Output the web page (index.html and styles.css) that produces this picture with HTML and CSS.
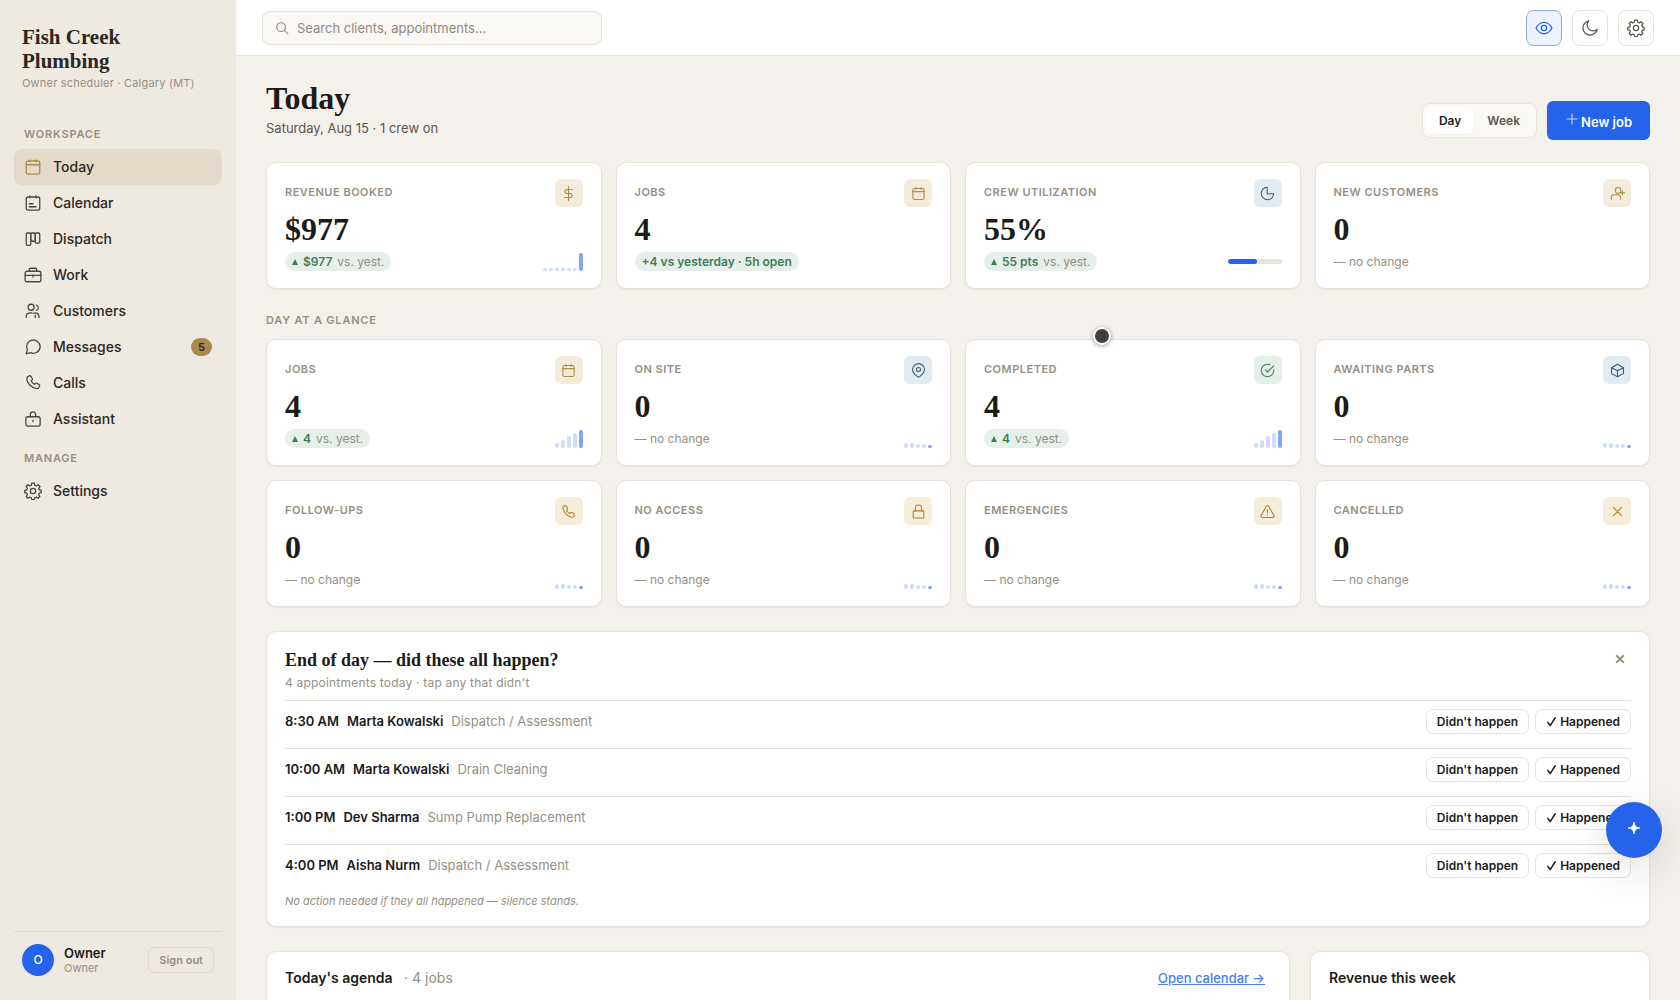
FILE: index.html
```
<!DOCTYPE html>
<html lang="en">
<head>
  <meta charset="UTF-8" />
  <title>Today - Fish Creek Plumbing</title>
  <meta name="viewport" content="width=device-width, initial-scale=1.0" />
  <link rel="stylesheet" href="styles.css">
</head>
<body>

<!-- icon sprite -->
<svg class="sprite" aria-hidden="true">
  <symbol id="i-calendar" viewBox="0 0 24 24"><rect x="3" y="4" width="18" height="17.500" rx="2.500"/><path d="M3 9h18M8 2.500V5M16 2.500V5"/></symbol>
  <symbol id="i-schedule" viewBox="0 0 24 24"><rect x="3" y="4" width="18" height="17.500" rx="2.500"/><path d="M8 2.500V5M16 2.500V5M7 13h5M7 17h9"/></symbol>
  <symbol id="i-board" viewBox="0 0 24 24"><rect x="3" y="4" width="6" height="16.500" rx="1.500"/><rect x="9" y="4" width="6" height="11" rx="1.500"/><rect x="15" y="4" width="6" height="13.500" rx="1.500"/></symbol>
  <symbol id="i-work" viewBox="0 0 24 24"><rect x="1.500" y="7" width="21" height="14" rx="2.500"/><path d="M7 7V5a2 2 0 0 1 2-2h6a2 2 0 0 1 2 2v2M1.500 12.500h21M12 12v2.500"/></symbol>
  <symbol id="i-people" viewBox="0 0 24 24"><circle cx="9.500" cy="7" r="4"/><path d="M3 20.500v-1c0-3.500 2.500-5 5.500-5h2M16.500 4c1.500.500 2.500 1.800 2.500 3.500S18 10.500 16.500 11M12.500 15c4-1.500 7.500.500 7.500 4.500v1M15 17.500v3"/></symbol>
  <symbol id="i-chat" viewBox="0 0 24 24"><path d="M21.500 11.500a9 9 0 0 1-13 8L3 21l1.500-5.200a9 9 0 1 1 17-4.300z"/></symbol>
  <symbol id="i-phone" viewBox="0 0 24 24"><path d="M21 16.400v2.700a2 2 0 0 1-2.200 2A17.500 17.500 0 0 1 3 5.200 2 2 0 0 1 5 3h2.700a2 2 0 0 1 2 1.700c.1.900.3 1.700.6 2.500a2 2 0 0 1-.4 2L8.800 10.300a14 14 0 0 0 5 5l1.100-1.100a2 2 0 0 1 2-.4c.8.300 1.600.5 2.500.6a2 2 0 0 1 1.600 2z"/></symbol>
  <symbol id="i-call" viewBox="0 0 24 24"><path d="M4 4.500L7 2.500a1.500 1.500 0 0 1 2 .4l2 3.100a1.500 1.500 0 0 1-.3 1.900L9.500 9c.8 2 2.500 3.800 4.700 4.800l1.500-1.300a1.500 1.500 0 0 1 1.800-.1l2.800 1.900a1.500 1.500 0 0 1 .4 2L19 19.300C11.500 20.500 3 12.500 4 4.500z"/></symbol>
  <symbol id="i-assistant" viewBox="0 0 24 24"><rect x="2.500" y="9" width="19" height="12.500" rx="2.500"/><path d="M8.500 9V6a3.500 3.500 0 0 1 7 0v3M12 13.500v2"/></symbol>
  <symbol id="i-gear" viewBox="0 0 24 24"><circle cx="12" cy="12" r="3.500"/><path d="M10.300 1.500h3.400l.6 2.800 2.200.9 2.400-1.600 2.400 2.400-1.600 2.500.9 2.100 2.300.7v2.900l-2.400.6-.9 2.200 1.500 2.400-2.300 2.300-2.400-1.500-2.200.9-.7 2.400h-3l-.7-2.400-2.200-.9-2.400 1.500-2.300-2.300 1.500-2.400-.9-2.200-2.500-.6v-3l2.500-.6.900-2.200-1.500-2.400 2.300-2.400 2.400 1.600 2.200-.9z"/></symbol>
  <symbol id="i-search" viewBox="0 0 24 24"><circle cx="10.500" cy="10.500" r="7.500"/><path d="M16 16l6 6"/></symbol>
  <symbol id="i-eye" viewBox="0 0 24 24"><path d="M1.500 12S5 4.500 12 4.500 22.500 12 22.500 12 19 19.500 12 19.500 1.500 12 1.500 12z"/><circle cx="12" cy="12" r="3.500"/></symbol>
  <symbol id="i-moon" viewBox="0 0 24 24"><path d="M21.500 13.500A9.500 9.500 0 1 1 10.500 2.500a7.500 7.500 0 0 0 11 11z"/></symbol>
  <symbol id="i-plus" viewBox="0 0 24 24"><path d="M12 2v20M2 12h20"/></symbol>
  <symbol id="i-dollar" viewBox="0 0 24 24"><path d="M12 1v22M18 5.500H9.500a3.250 3.250 0 0 0 0 6.500h5a3.250 3.250 0 0 1 0 6.500H5.500"/></symbol>
  <symbol id="i-pie" viewBox="0 0 24 24"><path d="M11.500 2A10 10 0 1 0 22 12.500H11.500z"/></symbol>
  <symbol id="i-user-plus" viewBox="0 0 24 24"><circle cx="13" cy="7" r="4.500"/><path d="M2 21v-2c0-3 2-5 5-5h5c3 0 5 2 5 5v2M20 7.500v7M16.500 11h7"/></symbol>
  <symbol id="i-pin" viewBox="0 0 24 24"><path d="M21.500 10.500C21.500 17 12 23 12 23S2.500 17 2.500 10.500a9.500 9.500 0 0 1 19 0z"/><circle cx="12" cy="10.500" r="3.200"/></symbol>
  <symbol id="i-check" viewBox="0 0 24 24"><path d="M22 11v1a10 10 0 1 1-6-9.200M22 4.500L12 14.500l-3.500-3.500"/></symbol>
  <symbol id="i-box" viewBox="0 0 24 24"><path d="M21.500 7.500L12 2 2.500 7.500v9.500L12 22l9.500-5zM2.500 7.500L12 12.500l9.500-5M12 12.500V22"/></symbol>
  <symbol id="i-lock" viewBox="0 0 24 24"><rect x="3.500" y="11" width="17" height="11.500" rx="1"/><path d="M7 11V6.500a5 5 0 0 1 10 0V11"/></symbol>
  <symbol id="i-alert" viewBox="0 0 24 24"><path d="M10.300 3.300L1.700 18.500A2 2 0 0 0 3.400 21.500h17.200a2 2 0 0 0 1.700-3L13.700 3.300a2 2 0 0 0-3.400 0zM12 9v5M12 17.500v.5"/></symbol>
  <symbol id="i-x" viewBox="0 0 24 24"><path d="M5.500 5.500l13 13M18.500 5.500l-13 13"/></symbol>
  <symbol id="i-tick" viewBox="0 0 12 12"><path d="M2 7l2.500 3.500L10 2"/></symbol>
  <symbol id="i-spark" viewBox="0 0 24 24"><path d="M12 0c1 8 4 11 12 12-8 1-11 4-12 12-1-8-4-11-12-12 8-1 11-4 12-12z"/></symbol>
</svg>

<div class="app">
  <aside class="sidebar">
    <div class="brand">
      <div class="brand-name">Fish Creek Plumbing</div>
      <div class="brand-sub">Owner scheduler · Calgary (MT)</div>
    </div>

    <nav class="nav">
      <div class="nav-label">Workspace</div>
      <a href="#today" class="nav-item active"><svg><use href="#i-calendar"/></svg>Today</a>
      <a href="#calendar" class="nav-item"><svg><use href="#i-schedule"/></svg>Calendar</a>
      <a href="#dispatch" class="nav-item"><svg><use href="#i-board"/></svg>Dispatch</a>
      <a href="#work" class="nav-item"><svg><use href="#i-work"/></svg>Work</a>
      <a href="#customers" class="nav-item"><svg><use href="#i-people"/></svg>Customers</a>
      <a href="#messages" class="nav-item"><svg><use href="#i-chat"/></svg>Messages<span class="count">5</span></a>
      <a href="#calls" class="nav-item"><svg><use href="#i-call"/></svg>Calls</a>
      <a href="#assistant" class="nav-item"><svg><use href="#i-assistant"/></svg>Assistant</a>
      <div class="nav-label">Manage</div>
      <a href="#settings" class="nav-item"><svg><use href="#i-gear"/></svg>Settings</a>
    </nav>

    <div class="user">
      <div class="avatar">O</div>
      <div class="user-info">
        <div class="user-name">Owner</div>
        <div class="user-role">Owner</div>
      </div>
      <button type="button" class="sign-out">Sign out</button>
    </div>
  </aside>

  <div class="page">
    <header class="topbar">
      <label class="search">
        <svg><use href="#i-search"/></svg>
        <input type="search" placeholder="Search clients, appointments..." aria-label="Search" />
      </label>
      <div class="tools">
        <button type="button" class="icon-btn on" aria-label="Toggle view"><svg><use href="#i-eye"/></svg></button>
        <button type="button" class="icon-btn" aria-label="Dark mode"><svg><use href="#i-moon"/></svg></button>
        <button type="button" class="icon-btn" aria-label="Settings"><svg><use href="#i-gear"/></svg></button>
      </div>
    </header>

    <main class="content">
      <div class="page-head">
        <div>
          <h1>Today</h1>
          <p class="date">Saturday, Aug 15 · 1 crew on</p>
        </div>
        <div class="head-actions">
          <div class="segment">
            <button type="button" class="selected">Day</button>
            <button type="button">Week</button>
          </div>
          <button type="button" class="new-job"><svg><use href="#i-plus"/></svg>New job</button>
        </div>
      </div>

      <section class="cards">
        <div class="card">
          <div class="card-top"><span class="label">Revenue booked</span><span class="badge gold"><svg><use href="#i-dollar"/></svg></span></div>
          <div class="value">$977</div>
          <div class="card-foot">
            <span class="pill"><i class="up"></i><b>$977</b> vs. yest.</span>
            <span class="spark week"><i></i><i></i><i></i><i></i><i></i><i></i><i></i></span>
          </div>
        </div>
        <div class="card">
          <div class="card-top"><span class="label">Jobs</span><span class="badge gold"><svg><use href="#i-calendar"/></svg></span></div>
          <div class="value">4</div>
          <div class="card-foot"><span class="pill"><b>+4 vs yesterday · 5h open</b></span></div>
        </div>
        <div class="card">
          <div class="card-top"><span class="label">Crew utilization</span><span class="badge blue"><svg><use href="#i-pie"/></svg></span></div>
          <div class="value">55%</div>
          <div class="card-foot">
            <span class="pill"><i class="up"></i><b>55 pts</b> vs. yest.</span>
            <span class="meter"><i style="width: 54%"></i></span>
          </div>
        </div>
        <div class="card">
          <div class="card-top"><span class="label">New customers</span><span class="badge gold"><svg><use href="#i-user-plus"/></svg></span></div>
          <div class="value">0</div>
          <div class="card-foot"><span class="flat">— no change</span></div>
        </div>
      </section>

      <h2 class="section-label">Day at a glance</h2>

      <section class="cards">
        <div class="card">
          <div class="card-top"><span class="label">Jobs</span><span class="badge gold"><svg><use href="#i-calendar"/></svg></span></div>
          <div class="value">4</div>
          <div class="card-foot">
            <span class="pill"><i class="up"></i><b>4</b> vs. yest.</span>
            <span class="spark rise"><i></i><i></i><i></i><i></i><i></i></span>
          </div>
        </div>
        <div class="card">
          <div class="card-top"><span class="label">On site</span><span class="badge blue"><svg><use href="#i-pin"/></svg></span></div>
          <div class="value">0</div>
          <div class="card-foot">
            <span class="flat">— no change</span>
            <span class="spark"><i></i><i></i><i></i><i></i><i></i></span>
          </div>
        </div>
        <div class="card">
          <div class="card-top"><span class="label">Completed</span><span class="badge green"><svg><use href="#i-check"/></svg></span></div>
          <div class="value">4</div>
          <div class="card-foot">
            <span class="pill"><i class="up"></i><b>4</b> vs. yest.</span>
            <span class="spark rise"><i></i><i></i><i></i><i></i><i></i></span>
          </div>
        </div>
        <div class="card">
          <div class="card-top"><span class="label">Awaiting parts</span><span class="badge blue"><svg><use href="#i-box"/></svg></span></div>
          <div class="value">0</div>
          <div class="card-foot">
            <span class="flat">— no change</span>
            <span class="spark"><i></i><i></i><i></i><i></i><i></i></span>
          </div>
        </div>
        <div class="card">
          <div class="card-top"><span class="label">Follow-ups</span><span class="badge amber"><svg><use href="#i-phone"/></svg></span></div>
          <div class="value">0</div>
          <div class="card-foot">
            <span class="flat">— no change</span>
            <span class="spark"><i></i><i></i><i></i><i></i><i></i></span>
          </div>
        </div>
        <div class="card">
          <div class="card-top"><span class="label">No access</span><span class="badge amber"><svg><use href="#i-lock"/></svg></span></div>
          <div class="value">0</div>
          <div class="card-foot">
            <span class="flat">— no change</span>
            <span class="spark"><i></i><i></i><i></i><i></i><i></i></span>
          </div>
        </div>
        <div class="card">
          <div class="card-top"><span class="label">Emergencies</span><span class="badge amber"><svg><use href="#i-alert"/></svg></span></div>
          <div class="value">0</div>
          <div class="card-foot">
            <span class="flat">— no change</span>
            <span class="spark"><i></i><i></i><i></i><i></i><i></i></span>
          </div>
        </div>
        <div class="card">
          <div class="card-top"><span class="label">Cancelled</span><span class="badge amber"><svg><use href="#i-x"/></svg></span></div>
          <div class="value">0</div>
          <div class="card-foot">
            <span class="flat">— no change</span>
            <span class="spark"><i></i><i></i><i></i><i></i><i></i></span>
          </div>
        </div>
      </section>

      <section class="panel">
        <div class="panel-head">
          <div>
            <h2 class="review-title">End of day — did these all happen?</h2>
            <p class="review-sub">4 appointments today · tap any that didn't</p>
          </div>
          <button type="button" class="close" aria-label="Dismiss"><svg><use href="#i-x"/></svg></button>
        </div>
        <ul class="review">
          <li>
            <span class="time">8:30 AM</span><span class="client">Marta Kowalski</span><span class="service">Dispatch / Assessment</span>
            <button type="button" class="small">Didn't happen</button>
            <button type="button" class="small"><svg><use href="#i-tick"/></svg>Happened</button>
          </li>
          <li>
            <span class="time">10:00 AM</span><span class="client">Marta Kowalski</span><span class="service">Drain Cleaning</span>
            <button type="button" class="small">Didn't happen</button>
            <button type="button" class="small"><svg><use href="#i-tick"/></svg>Happened</button>
          </li>
          <li>
            <span class="time">1:00 PM</span><span class="client">Dev Sharma</span><span class="service">Sump Pump Replacement</span>
            <button type="button" class="small">Didn't happen</button>
            <button type="button" class="small"><svg><use href="#i-tick"/></svg>Happened</button>
          </li>
          <li>
            <span class="time">4:00 PM</span><span class="client">Aisha Nurm</span><span class="service">Dispatch / Assessment</span>
            <button type="button" class="small">Didn't happen</button>
            <button type="button" class="small"><svg><use href="#i-tick"/></svg>Happened</button>
          </li>
        </ul>
        <p class="note">No action needed if they all happened — silence stands.</p>
      </section>

      <div class="columns">
        <section class="panel agenda">
          <h3>Today's agenda <span>· 4 jobs</span></h3>
          <a href="#calendar">Open calendar →</a>
        </section>
        <section class="panel">
          <h3>Revenue this week</h3>
        </section>
      </div>
    </main>
  </div>
</div>

<button type="button" class="fab" aria-label="Ask assistant"><svg><use href="#i-spark"/></svg></button>
<div class="pointer"></div>

</body>
</html>
```
FILE: styles.css
```
* {
  box-sizing: border-box;
}

body {
  margin: 0;
  font-family: Inter, "Liberation Sans", sans-serif;
  font-size: 14px;
  line-height: 20px;
  color: #1c1b17;
  background: #f4f1ec;
}

h1, h2, h3, p, ul {
  margin: 0;
  padding: 0;
}

button, input {
  font-family: inherit;
}

button {
  cursor: pointer;
  padding: 0;
}

svg {
  display: block;
  flex-shrink: 0;
  fill: none;
  stroke: currentColor;
  stroke-width: 1.7;
  stroke-linecap: round;
  stroke-linejoin: round;
}

.sprite {
  position: absolute;
  width: 0;
  height: 0;
}

.app {
  display: flex;
  height: 100vh;
}

/* sidebar */
.sidebar {
  width: 236px;
  flex-shrink: 0;
  display: flex;
  flex-direction: column;
  padding: 25px 14px 24px;
  background: #eee9e1;
}

.brand {
  padding: 0 8px;
  margin-bottom: 22px;
}

.brand-name {
  width: 140px;
  font: bold 21px/24px "Liberation Serif", serif;
  color: #2b2822;
}

.brand-sub {
  margin-top: 2px;
  font-size: 11px;
  line-height: 16px;
  letter-spacing: 0.2px;
  color: #968f82;
}

.nav-label {
  padding: 0 10px;
  margin: 13px 0 7px;
  font-size: 11px;
  line-height: 16px;
  font-weight: 600;
  letter-spacing: 0.8px;
  text-transform: uppercase;
  color: #968f82;
}

.nav-item {
  display: flex;
  align-items: center;
  gap: 11px;
  height: 36px;
  padding: 0 10px;
  border-radius: 8px;
  font-weight: 500;
  color: #2b2822;
  text-decoration: none;
}

.nav-item svg {
  width: 18px;
  height: 18px;
  color: #4a463e;
}

.nav-item.active {
  background: #e3dac9;
}

.nav-item.active svg {
  color: #b08a4a;
}

.count {
  margin-left: auto;
  min-width: 21px;
  border-radius: 9px;
  background: #ab884c;
  font-size: 11px;
  line-height: 18px;
  font-weight: 600;
  text-align: center;
}

.user {
  display: flex;
  align-items: center;
  gap: 10px;
  margin-top: auto;
  padding: 12px 8px 0;
  border-top: 1px solid #e1d9cb;
}

.avatar {
  width: 32px;
  height: 32px;
  border-radius: 50%;
  background: #2563eb;
  color: #fff;
  font-size: 12px;
  line-height: 32px;
  font-weight: 500;
  text-align: center;
}

.user-name {
  font-size: 13px;
  line-height: 15px;
  font-weight: 600;
}

.user-role {
  font-size: 11px;
  line-height: 14px;
  color: #968f82;
}

.sign-out {
  margin-left: auto;
  height: 26px;
  padding: 0 10px;
  border: 1px solid #e1d9cb;
  border-radius: 6px;
  background: none;
  font-size: 11px;
  font-weight: 600;
  color: #968f82;
}

/* top bar */
.page {
  flex: 1;
  min-width: 0;
  display: flex;
  flex-direction: column;
}

.topbar {
  display: flex;
  align-items: center;
  justify-content: space-between;
  flex-shrink: 0;
  height: 56px;
  padding: 0 26px;
  background: #fff;
  border-bottom: 1px solid #e6e1d7;
}

.search {
  display: flex;
  align-items: center;
  gap: 8px;
  width: 340px;
  height: 34px;
  padding: 0 12px;
  border: 1px solid #e8e2d8;
  border-radius: 8px;
  background: #fbf9f6;
}

.search svg {
  width: 14px;
  height: 14px;
  stroke-width: 2;
  color: #968f82;
}

.search input {
  flex: 1;
  min-width: 0;
  padding: 0;
  border: 0;
  outline: 0;
  background: none;
  font-size: 13px;
}

.search input::placeholder {
  color: #8f897e;
}

.tools {
  display: flex;
  gap: 10px;
}

.icon-btn {
  display: grid;
  place-items: center;
  width: 36px;
  height: 36px;
  border: 1px solid #e8e2d8;
  border-radius: 8px;
  background: #fff;
  color: #5b564c;
}

.icon-btn svg {
  width: 18px;
  height: 18px;
}

.icon-btn.on {
  border-color: #8fabee;
  background: #edf2fd;
  color: #2563eb;
}

/* page */
.content {
  flex: 1;
  overflow-y: auto;
  scrollbar-width: none;
  padding: 24px 30px;
}

.page-head {
  display: flex;
  justify-content: space-between;
  align-items: flex-end;
  margin-bottom: 22px;
}

h1 {
  font: bold 32px/36px "Liberation Serif", serif;
}

.date {
  margin-top: 2px;
  padding-bottom: 2px;
  font-size: 13px;
  line-height: 20px;
  color: #5b564c;
}

.head-actions {
  display: flex;
  align-items: center;
  gap: 10px;
}

.segment {
  display: flex;
  padding: 3px;
  border: 1px solid #e8e2d8;
  border-radius: 8px;
  background: #fbf9f6;
}

.segment button {
  height: 27px;
  padding: 0 13px;
  border: 0;
  border-radius: 6px;
  background: none;
  font-size: 12px;
  font-weight: 600;
  color: #5b564c;
}

.segment .selected {
  background: #fff;
  color: #1c1b17;
  box-shadow: 0 1px 2px rgba(40, 30, 10, 0.06);
}

.new-job {
  display: flex;
  align-items: center;
  gap: 3px;
  height: 39px;
  padding: 2px 18px 0 19px;
  border: 0;
  border-radius: 6px;
  background: #2563eb;
  color: #fff;
  font-size: 13px;
  font-weight: 600;
}

.new-job svg {
  width: 12px;
  height: 12px;
  margin-bottom: 6px;
  stroke-width: 2;
  opacity: 0.8;
}

.cards {
  display: grid;
  grid-template-columns: repeat(4, 1fr);
  gap: 14px;
}

.card, .panel {
  border: 1px solid #e8e2d8;
  border-radius: 10px;
  background: #fff;
  box-shadow: 0 1px 2px rgba(40, 30, 10, 0.06);
}

.card {
  padding: 16px 18px 17px;
}

.card-top {
  display: flex;
  justify-content: space-between;
  align-items: flex-start;
  height: 28px;
}

.label {
  font-size: 11px;
  line-height: 26px;
  font-weight: 600;
  letter-spacing: 0.5px;
  text-transform: uppercase;
  color: #968f82;
}

.badge {
  display: grid;
  place-items: center;
  width: 28px;
  height: 28px;
  border-radius: 6px;
}

.badge svg {
  width: 15px;
  height: 15px;
}

.badge.gold {
  background: #f3ebdc;
  color: #b08a4a;
}

.badge.amber {
  background: #f6eddb;
  color: #b57f2f;
}

.badge.blue {
  background: #e3ebf0;
  color: #33607e;
}

.badge.green {
  background: #e6efe9;
  color: #3c7d58;
}

.value {
  margin: 6px 0 7px;
  font: bold 32px/32px "Liberation Serif", serif;
}

.card-foot {
  display: flex;
  justify-content: space-between;
  align-items: center;
  height: 19px;
  font-size: 12px;
  line-height: 19px;
  color: #968f82;
}

.pill {
  display: flex;
  align-items: center;
  gap: 5px;
  padding: 0 7px;
  border-radius: 10px;
  background: #e6efe9;
}

.pill b {
  font-weight: 600;
  color: #3c7d58;
}

.up {
  border: 3px solid transparent;
  border-top: 0;
  border-bottom: 6px solid #3c7d58;
}

.spark {
  display: flex;
  align-items: flex-end;
  gap: 2px;
  height: 19px;
}

.spark i {
  width: 4px;
  height: 4px;
  border-radius: 2px;
  background: #cfdcfb;
}

.spark i:nth-child(-n+2) {
  height: 5px;
}

.spark i:last-child {
  height: 3px;
  background: #84a5f3;
}

.spark.week i {
  height: 3px;
}

.spark.week i:last-child,
.spark.rise i:last-child {
  height: 18px;
}

.spark.rise i:nth-child(2) {
  height: 8px;
}

.spark.rise i:nth-child(3) {
  height: 12px;
}

.spark.rise i:nth-child(4) {
  height: 15px;
}

.meter {
  width: 54px;
  height: 5px;
  border-radius: 3px;
  overflow: hidden;
  background: #e8e4dc;
}

.meter i {
  display: block;
  height: 100%;
  border-radius: 3px;
  background: #2563eb;
}

.section-label {
  margin: 22px 0 10px;
  font-size: 11px;
  line-height: 18px;
  font-weight: 600;
  letter-spacing: 0.8px;
  text-transform: uppercase;
  color: #968f82;
}

.panel {
  margin-top: 24px;
  padding: 16px 18px;
}

.panel-head {
  display: flex;
  justify-content: space-between;
  align-items: flex-start;
  margin-bottom: 8px;
}

.review-title {
  font: bold 18px/24px "Liberation Serif", serif;
}

.review-sub {
  margin-top: 2px;
  font-size: 12px;
  line-height: 18px;
  letter-spacing: 0.2px;
  color: #968f82;
}

.close {
  display: grid;
  place-items: center;
  width: 22px;
  height: 22px;
  border: 0;
  background: none;
  color: #968f82;
}

.close svg {
  width: 14px;
  height: 14px;
  stroke-width: 3.4;
  stroke-linecap: butt;
}

.review {
  list-style: none;
}

.review li {
  display: flex;
  align-items: flex-start;
  gap: 8px;
  height: 48px;
  padding: 8px 0 14px;
  border-top: 1px solid #e8e2d8;
  font-size: 13px;
  line-height: 24px;
}

.time, .client {
  font-weight: 600;
}

.service {
  margin-right: auto;
  color: #968f82;
}

.small {
  display: flex;
  align-items: center;
  gap: 3px;
  height: 25px;
  padding: 0 10px;
  border: 1px solid #e8e2d8;
  border-radius: 7px;
  background: #fff;
  font-size: 12px;
  font-weight: 600;
  color: #1c1b17;
}

.small + .small {
  margin-left: -2px;
}

.small svg {
  width: 11px;
  height: 11px;
}

.note {
  font-size: 11px;
  line-height: 18px;
  font-style: italic;
  color: #968f82;
}

.columns {
  display: grid;
  grid-template-columns: 1fr 340px;
  gap: 20px;
}

.columns .panel {
  min-height: 200px;
}

h3 {
  font-size: 14px;
  line-height: 20px;
  font-weight: 600;
}

h3 span {
  margin-left: 8px;
  font-weight: 400;
  color: #968f82;
}

.agenda {
  display: flex;
  justify-content: space-between;
  align-items: flex-start;
  padding-right: 24px;
}

.agenda a {
  font-size: 13px;
  font-weight: 500;
  color: #4a7dea;
}

.fab {
  position: fixed;
  right: 18px;
  bottom: 142px;
  display: grid;
  place-items: center;
  width: 56px;
  height: 56px;
  padding-bottom: 4px;
  border: 0;
  border-radius: 50%;
  background: #2563eb;
  color: #fff;
  box-shadow: 0 12px 40px rgba(30, 25, 15, 0.14);
}

.fab svg {
  width: 12px;
  height: 12px;
  fill: currentColor;
}

/* pointer marker over the cards */
.pointer {
  position: fixed;
  left: 1093px;
  top: 327px;
  width: 18px;
  height: 18px;
  border: 2px solid #fff;
  border-radius: 50%;
  background: #403f3c;
  box-shadow: 0 1px 4px rgba(0, 0, 0, 0.4);
}
```
